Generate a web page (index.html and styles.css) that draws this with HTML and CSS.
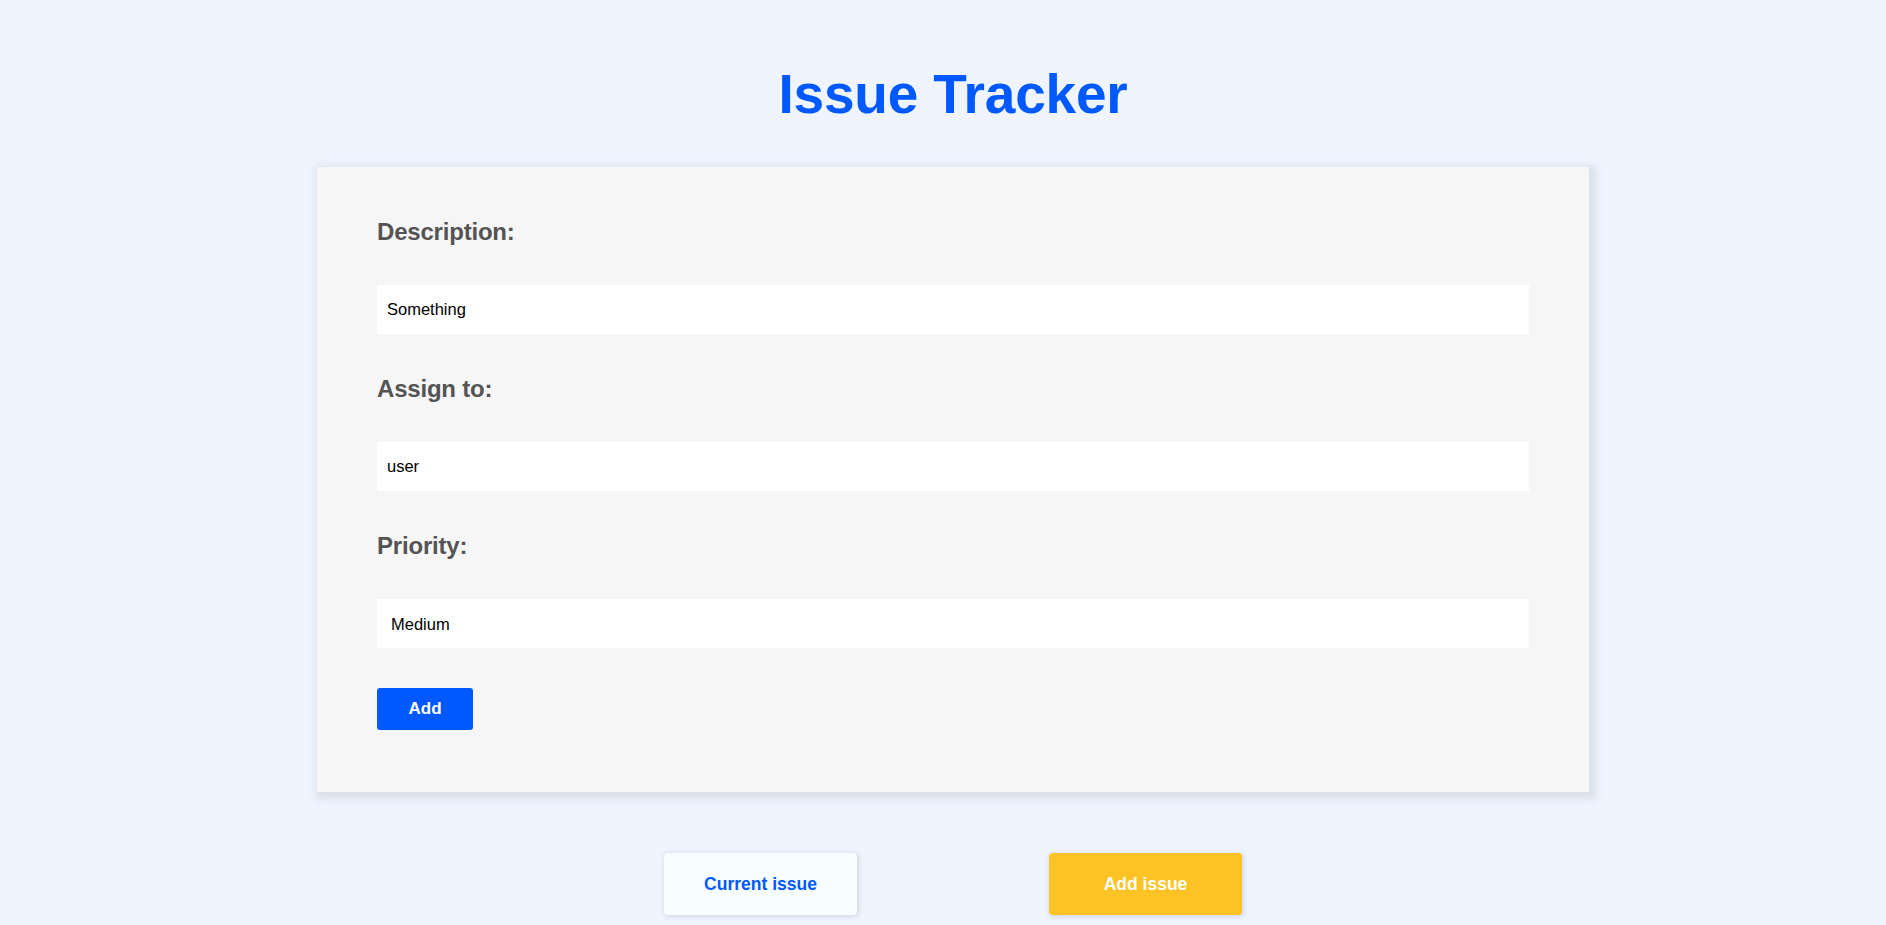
FILE: index.html
```html
<!DOCTYPE html>
<html lang="en">
<head>
<meta charset="utf-8">
<title>Issue Tracker</title>
<link rel="stylesheet" href="styles.css">
</head>
<body>
<div class="page">
  <h1 class="title">Issue Tracker</h1>
  <form class="card">
    <label class="label" for="desc">Description:</label>
    <input class="field" id="desc" type="text" value="Something">
    <label class="label" for="assign">Assign to:</label>
    <input class="field" id="assign" type="text" value="user">
    <label class="label" for="prio">Priority:</label>
    <select class="field select" id="prio">
      <option>Medium</option>
    </select>
    <button class="add-btn" type="button">Add</button>
  </form>
  <div class="tabs">
    <button class="tab tab-current" type="button">Current issue</button>
    <button class="tab tab-add" type="button">Add issue</button>
  </div>
</div>
</body>
</html>
```

FILE: styles.css
```css
html, body {
  margin: 0;
  padding: 0;
}

body {
  background: #eff4ff;
  font-family: "Liberation Sans", Arial, sans-serif;
  min-height: 925px;
}

.page {
  display: flex;
  flex-direction: column;
  align-items: center;
  padding-top: 63px;
  padding-left: 20px;
}

.title {
  margin: 0 0 42px 0;
  font-size: 55px;
  line-height: 62px;
  font-weight: 700;
  color: #0058ff;
  letter-spacing: -0.2px;
}

.card {
  box-sizing: border-box;
  width: 1272px;
  background: #f6f6f6;
  padding: 51px 60px 62px 60px;
  display: flex;
  flex-direction: column;
  align-items: flex-start;
  box-shadow: 3px 3px 7px 4px rgba(200, 210, 212, 0.55);
}

.label {
  font-size: 24px;
  line-height: 28px;
  font-weight: 700;
  color: #545454;
  margin-bottom: 39px;
  letter-spacing: -0.2px;
}

.field {
  box-sizing: border-box;
  width: 100%;
  height: 49px;
  border: none;
  outline: none;
  background: #ffffff;
  padding: 0 10px;
  font-family: "Liberation Sans", Arial, sans-serif;
  font-size: 16.5px;
  color: #000000;
  margin: 0 0 41px 0;
  border-radius: 0;
}

.select {
  -webkit-appearance: none;
  appearance: none;
  padding-left: 14px;
  margin-bottom: 40px;
}

.add-btn {
  width: 96px;
  height: 42px;
  border: none;
  border-radius: 3px;
  background: #0058ff;
  color: #ffffff;
  font-family: "Liberation Sans", Arial, sans-serif;
  font-weight: 700;
  font-size: 17px;
  padding: 0;
  cursor: pointer;
}

.tabs {
  display: flex;
  justify-content: center;
  gap: 192px;
  margin-top: 61px;
}

.tab {
  width: 193px;
  height: 62px;
  border: none;
  border-radius: 4px;
  font-family: "Liberation Sans", Arial, sans-serif;
  font-weight: 700;
  font-size: 17.5px;
  padding: 0;
  cursor: pointer;
  box-shadow: 1px 1px 4px 1px rgba(170, 180, 182, 0.4);
}

.tab-current {
  background: #f8fdff;
  color: #0058ff;
}

.tab-add {
  background: #fdc324;
  color: #ffffff;
}
```
